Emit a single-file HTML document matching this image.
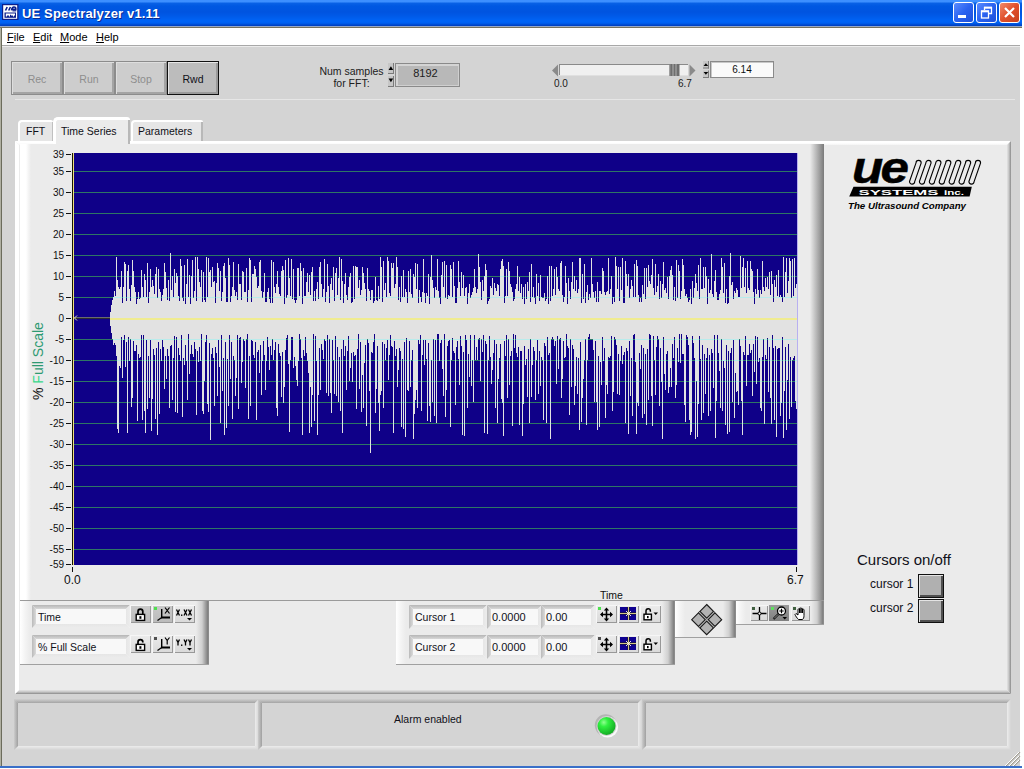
<!DOCTYPE html><html><head><meta charset="utf-8"><style>
*{box-sizing:border-box}
body{margin:0;width:1024px;height:769px;background:#fff;position:relative;overflow:hidden;font-family:'Liberation Sans',sans-serif;color:#000}
.a{position:absolute}
.t{position:absolute;white-space:nowrap;line-height:1}
</style></head><body><div class=a style="left:0;top:0;width:1022px;height:26px;background:linear-gradient(#3d8fff 0,#3d8fff 2px,#0a62e6 3px,#0058e2 6px,#0054e0 12px,#005ae8 16px,#0064f6 21px,#0060f0 23px,#0048cc 25px,#003cbc 26px)"></div><div class=a style="left:0;top:26px;width:1022px;height:1px;background:#98a8c4"></div><div class=a style="left:0;top:27px;width:1022px;height:1px;background:#76725f"></div><div class=a style="left:0;top:28px;width:1px;height:738px;background:#b0b0a2"></div><div class=a style="left:1px;top:28px;width:1px;height:738px;background:#6c6c5c"></div><div class=a style="left:2px;top:28px;width:1018px;height:17px;background:#fff"></div><div class=a style="left:2px;top:45px;width:1018px;height:1px;background:#a8a8a8"></div><div class=a style="left:2px;top:46px;width:1018px;height:1px;background:#ececec"></div><div class=a style="left:2px;top:47px;width:1018px;height:719px;background:#d4d4d4"></div><div class=a style="left:0;top:766px;width:1022px;height:2px;background:#3a6fc8"></div><svg class=a style="left:2px;top:4px" width="17" height="16"><rect x="0" y="0" width="16.5" height="16" fill="#0a1e8c"/><rect x="1.2" y="1.2" width="14" height="13.6" fill="#fff"/>
<path d="M3.5 6.5L5.2 3M6.7 6.5L8.4 3M9.5 6.3Q10 3 12 3Q14 3 13.8 5.4H10.5" stroke="#0a1e8c" stroke-width="1.6" fill="none"/><path d="M10.5 6.8H14.2" stroke="#0a1e8c" stroke-width="1.2"/>
<rect x="2.5" y="8.5" width="11.5" height="5.3" fill="#0a1e8c"/><path d="M3.8 9.6H13V11.4H12V12.6H11V11.4H9V10.8H8V12.6H7V11.4H5V12.6H3.8Z" fill="#fff"/></svg><div class=t style="left:22px;top:6.5px;font-size:13px;font-weight:bold;letter-spacing:0.15px;color:#fff;text-shadow:1px 1px 0 #0a2a90">UE Spectralyzer v1.11</div><div class=a style="left:953px;top:2px;width:21px;height:21px;border:1px solid #fff;border-radius:3px;background:linear-gradient(135deg,#5a8cff 0,#2a62f0 50%,#1e50d8 100%)"><div class=a style="left:4px;top:12px;width:8px;height:3px;background:#fff"></div></div><div class=a style="left:976px;top:2px;width:21px;height:21px;border:1px solid #fff;border-radius:3px;background:linear-gradient(135deg,#5a8cff 0,#2a62f0 50%,#1e50d8 100%)"><svg class=a style="left:0;top:0" width="21" height="21"><path d="M7.5 7V4.5H14.5V10.5H12" stroke="#fff" stroke-width="1.3" fill="none"/><rect x="7" y="3.8" width="8" height="1.8" fill="#fff"/><rect x="4.5" y="8" width="7" height="7" stroke="#fff" stroke-width="1.3" fill="none"/><rect x="4" y="7.5" width="8" height="1.8" fill="#fff"/></svg></div><div class=a style="left:999px;top:2px;width:21px;height:21px;border:1px solid #fff;border-radius:3px;background:linear-gradient(135deg,#f08a6a 0,#e0502c 50%,#c8401c 100%)"><svg class=a style="left:3px;top:3px" width="13" height="13"><path d="M2 2L11 11M11 2L2 11" stroke="#fff" stroke-width="2.2"/></svg></div><div class=t style="left:7px;top:32px;font-size:11px"><u>F</u>ile</div><div class=t style="left:33px;top:32px;font-size:11px"><u>E</u>dit</div><div class=t style="left:60px;top:32px;font-size:11px"><u>M</u>ode</div><div class=t style="left:96px;top:32px;font-size:11px"><u>H</u>elp</div><div class=a style="left:11px;top:61px;width:52px;height:34px;border:1px solid #8c8c8c;background:#cdcdcd;box-shadow:inset 1px 1px 0 #dedede,inset -2px -2px 0 #a4a4a4"></div><div class=t style="left:11px;top:74px;width:52px;text-align:center;font-size:10.5px;color:#8e8e8e">Rec</div><div class=a style="left:63px;top:61px;width:52px;height:34px;border:1px solid #8c8c8c;background:#cdcdcd;box-shadow:inset 1px 1px 0 #dedede,inset -2px -2px 0 #a4a4a4"></div><div class=t style="left:63px;top:74px;width:52px;text-align:center;font-size:10.5px;color:#8e8e8e">Run</div><div class=a style="left:115px;top:61px;width:52px;height:34px;border:1px solid #8c8c8c;background:#cdcdcd;box-shadow:inset 1px 1px 0 #dedede,inset -2px -2px 0 #a4a4a4"></div><div class=t style="left:115px;top:74px;width:52px;text-align:center;font-size:10.5px;color:#8e8e8e">Stop</div><div class=a style="left:167px;top:61px;width:52px;height:34px;border:1px solid #101010;background:#bcbcbc;box-shadow:inset 1px 1px 0 #e6e6e6,inset -2px -2px 0 #9a9a9a"></div><div class=t style="left:167px;top:74px;width:52px;text-align:center;font-size:10.5px;color:#101018">Rwd</div><div class=a style="left:15px;top:99px;width:1000px;height:1px;background:#e6e6e6"></div><div class=t style="left:319px;top:65px;font-size:10.5px;color:#202020;text-align:center;line-height:12px;width:65px">Num samples<br>for FFT:</div><svg class=a style="left:388px;top:63px;overflow:visible" width="7" height="24"><rect x="0" y="0" width="6" height="11.0" fill="#c6c6c6"/><rect x="0" y="10.0" width="6" height="1" fill="#7a7a7a"/><rect x="5" y="0" width="1" height="11.0" fill="#7a7a7a"/><rect x="0" y="13.0" width="6" height="11.0" fill="#c6c6c6"/><rect x="0" y="23" width="6" height="1" fill="#7a7a7a"/><rect x="5" y="13.0" width="1" height="11.0" fill="#7a7a7a"/><path d="M0.6 7.0H5.2L2.9 3.2Z" fill="#000"/><path d="M0.6 15.5H5.2L2.9 19.3Z" fill="#000"/></svg><div class=a style="left:395px;top:63px;width:65px;height:24px;border:1px solid #8a8a8a;background:#b8b8b8;box-shadow:inset 2px 2px 0 #d4d4d4,inset -1px -1px 0 #cfcfcf"></div><div class=t style="left:393px;top:68px;width:65px;text-align:center;font-size:11px;color:#202020">8192</div><svg class=a style="left:551px;top:63px" width="146" height="15">
<path d="M1 7.5L7 1.5V13.5Z" fill="#8a8a8a"/><path d="M138.5 1.5L144.5 7.5L138.5 13.5Z" fill="#8a8a8a"/>
<rect x="8" y="1" width="129" height="12" fill="#f0f0f0"/><rect x="8" y="1" width="129" height="1" fill="#8a8a8a"/><rect x="8" y="1" width="1" height="12" fill="#8a8a8a"/><rect x="8" y="12" width="129" height="1" fill="#e0e0e0"/>
<rect x="118.5" y="1" width="10" height="12" fill="#6e6e6e"/><rect x="121.5" y="1" width="1" height="12" fill="#b0b0b0"/><rect x="124.5" y="1" width="1" height="12" fill="#b0b0b0"/><rect x="118.5" y="1" width="1" height="12" fill="#909090"/>
</svg><div class=t style="left:554px;top:79px;font-size:10px;color:#202020">0.0</div><div class=t style="left:678px;top:79px;font-size:10px;color:#202020">6.7</div><svg class=a style="left:703px;top:61px;overflow:visible" width="7" height="17"><rect x="0" y="0" width="6" height="7.5" fill="#c6c6c6"/><rect x="0" y="6.5" width="6" height="1" fill="#7a7a7a"/><rect x="5" y="0" width="1" height="7.5" fill="#7a7a7a"/><rect x="0" y="9.5" width="6" height="7.5" fill="#c6c6c6"/><rect x="0" y="16" width="6" height="1" fill="#7a7a7a"/><rect x="5" y="9.5" width="1" height="7.5" fill="#7a7a7a"/><path d="M0.6 4.958333333333334H5.2L2.9 2.266666666666667Z" fill="#000"/><path d="M0.6 10.979166666666666H5.2L2.9 13.670833333333333Z" fill="#000"/></svg><div class=a style="left:710px;top:61px;width:64px;height:17px;border:1px solid #8a8a8a;background:#fafafa;box-shadow:inset 1px 1px 0 #c8c8c8"></div><div class=t style="left:710px;top:65px;width:64px;text-align:center;font-size:10px;color:#101010">6.14</div><div class=a style="left:15px;top:141px;width:996px;height:553px;background:#ebebeb"></div><div class=a style="left:15px;top:141px;width:996px;height:4px;background:linear-gradient(to bottom,#fff,#fff 50%,#f4f4f4);clip-path:polygon(0 0,100% 0,calc(100% - 4px) 100%,4px 100%)"></div><div class=a style="left:15px;top:690px;width:996px;height:4px;background:linear-gradient(to top,#8a8a8a,#c4c4c4 50%,#e4e4e4);clip-path:polygon(4px 0,calc(100% - 4px) 0,100% 100%,0 100%)"></div><div class=a style="left:15px;top:141px;width:4px;height:553px;background:linear-gradient(to right,#fff,#fff);clip-path:polygon(0 0,100% 4px,100% calc(100% - 4px),0 100%)"></div><div class=a style="left:1007px;top:141px;width:4px;height:553px;background:linear-gradient(to left,#8a8a8a,#c4c4c4 50%,#e4e4e4);clip-path:polygon(0 4px,100% 0,100% 100%,0 calc(100% - 4px))"></div><div class=a style="left:18px;top:120px;width:35px;height:21px;background:#e6e6e6;border-top:2px solid #fff;border-left:2px solid #fff;border-radius:4px 2px 0 0;box-shadow:inset -1px 0 0 #c0c0c0"></div><div class=a style="left:53px;top:117px;width:77px;height:28px;background:#ebebeb;border-top:3px solid #fff;border-left:3px solid #fff;border-radius:5px 3px 0 0;box-shadow:inset -2px 0 0 #b8b8b8"></div><div class=a style="left:131px;top:120px;width:72px;height:21px;background:#e6e6e6;border-top:2px solid #fff;border-left:2px solid #fff;border-radius:4px 2px 0 0;box-shadow:inset -2px 0 0 #b8b8b8"></div><div class=t style="left:26px;top:126px;font-size:10.5px;color:#101018">FFT</div><div class=t style="left:61px;top:126px;font-size:10.5px;color:#101018">Time Series</div><div class=t style="left:138px;top:126px;font-size:10.5px;color:#101018">Parameters</div><div class=a style="left:20px;top:144px;width:804px;height:457px;background:linear-gradient(90deg,#fff 0,#fff 6px,#f6f6f6 8px,#ebebeb 11px,#ebebeb 790px,#7a7a7a 804px);border-bottom:1px solid #9a9a9a"></div><svg class=a style="left:72px;top:153px" width="727" height="420" viewBox="72 153 727 420">
<rect x="72" y="153" width="726" height="412" fill="#0f0088"/>
<rect x="74" y="549" width="723" height="1" fill="#2e7664"/><rect x="74" y="528" width="723" height="1" fill="#2e7664"/><rect x="74" y="507" width="723" height="1" fill="#2e7664"/><rect x="74" y="486" width="723" height="1" fill="#2e7664"/><rect x="74" y="465" width="723" height="1" fill="#2e7664"/><rect x="74" y="444" width="723" height="1" fill="#2e7664"/><rect x="74" y="423" width="723" height="1" fill="#2e7664"/><rect x="74" y="402" width="723" height="1" fill="#2e7664"/><rect x="74" y="381" width="723" height="1" fill="#2e7664"/><rect x="74" y="360" width="723" height="1" fill="#2e7664"/><rect x="74" y="339" width="723" height="1" fill="#2e7664"/><rect x="74" y="318" width="723" height="1" fill="#2e7664"/><rect x="74" y="297" width="723" height="1" fill="#2e7664"/><rect x="74" y="276" width="723" height="1" fill="#2e7664"/><rect x="74" y="255" width="723" height="1" fill="#2e7664"/><rect x="74" y="234" width="723" height="1" fill="#2e7664"/><rect x="74" y="213" width="723" height="1" fill="#2e7664"/><rect x="74" y="192" width="723" height="1" fill="#2e7664"/><rect x="74" y="171" width="723" height="1" fill="#2e7664"/>
<path d="M110.5 312V326M111.5 305V333M112.5 300V339M113.5 297V345M114.5 291V343M115.5 296V345M116.5 257V356M117.5 280V429M118.5 287V433M119.5 289V366M120.5 287V368M121.5 271V337M122.5 303V378M123.5 287V340M124.5 262V335M125.5 264V367M126.5 301V342M127.5 271V433M128.5 265V337M129.5 289V361M130.5 301V339M131.5 285V407M132.5 260V398M133.5 271V341M134.5 287V351M135.5 292V351M136.5 304V345M137.5 299V421M138.5 292V354M139.5 299V358M140.5 298V357M141.5 270V335M142.5 287V420M143.5 297V335M144.5 274V411M145.5 280V433M146.5 297V340M147.5 263V409M148.5 303V356M149.5 292V398M150.5 269V340M151.5 287V431M152.5 280V399M153.5 286V349M154.5 294V355M155.5 274V419M156.5 267V348M157.5 298V435M158.5 269V342M159.5 289V414M160.5 292V349M161.5 301V361M162.5 295V340M163.5 289V347M164.5 263V389M165.5 272V356M166.5 288V379M167.5 300V349M168.5 280V356M169.5 301V408M170.5 253V346M171.5 290V345M172.5 276V400M173.5 297V358M174.5 269V336M175.5 283V412M176.5 273V337M177.5 276V413M178.5 296V348M179.5 301V355M180.5 259V361M181.5 266V335M182.5 298V417M183.5 301V358M184.5 265V365M185.5 304V345M186.5 284V361M187.5 259V400M188.5 297V334M189.5 275V374M190.5 304V354M191.5 276V345M192.5 260V354M193.5 298V357M194.5 291V342M195.5 257V349M196.5 301V415M197.5 257V351M198.5 269V362M199.5 282V347M200.5 287V361M201.5 270V334M202.5 302V411M203.5 272V414M204.5 300V381M205.5 302V342M206.5 257V335M207.5 297V404M208.5 258V412M209.5 272V343M210.5 270V440M211.5 287V354M212.5 267V348M213.5 282V358M214.5 281V406M215.5 303V347M216.5 283V353M217.5 263V396M218.5 268V340M219.5 291V367M220.5 271V423M221.5 301V335M222.5 292V391M223.5 266V358M224.5 263V435M225.5 278V342M226.5 302V428M227.5 302V359M228.5 258V406M229.5 265V335M230.5 302V379M231.5 296V342M232.5 287V419M233.5 262V356M234.5 290V360M235.5 296V396M236.5 292V378M237.5 300V335M238.5 264V409M239.5 284V338M240.5 284V337M241.5 300V383M242.5 271V362M243.5 272V339M244.5 292V341M245.5 292V388M246.5 268V339M247.5 302V334M248.5 290V419M249.5 258V356M250.5 260V406M251.5 302V340M252.5 274V341M253.5 274V355M254.5 266V358M255.5 269V342M256.5 277V420M257.5 288V352M258.5 286V350M259.5 262V373M260.5 260V345M261.5 291V395M262.5 298V361M263.5 292V341M264.5 273V355M265.5 302V390M266.5 302V361M267.5 292V337M268.5 288V347M269.5 299V370M270.5 303V346M271.5 260V355M272.5 303V339M273.5 262V360M274.5 287V350M275.5 293V342M276.5 284V408M277.5 271V416M278.5 287V344M279.5 294V353M280.5 296V356M281.5 271V397M282.5 266V352M283.5 270V403M284.5 304V387M285.5 260V350M286.5 298V338M287.5 295V335M288.5 258V364M289.5 278V432M290.5 296V360M291.5 259V337M292.5 299V337M293.5 269V368M294.5 300V357M295.5 303V366M296.5 300V380M297.5 268V386M298.5 268V361M299.5 296V334M300.5 263V339M301.5 271V358M302.5 304V435M303.5 268V350M304.5 296V356M305.5 296V337M306.5 282V353M307.5 273V361M308.5 292V373M309.5 275V433M310.5 295V387M311.5 272V427M312.5 267V395M313.5 301V334M314.5 291V421M315.5 301V336M316.5 289V361M317.5 282V435M318.5 299V395M319.5 267V348M320.5 262V390M321.5 284V344M322.5 297V350M323.5 289V359M324.5 259V339M325.5 302V341M326.5 292V393M327.5 264V335M328.5 286V396M329.5 303V339M330.5 284V393M331.5 278V413M332.5 290V340M333.5 267V360M334.5 301V394M335.5 273V336M336.5 268V396M337.5 295V347M338.5 278V402M339.5 257V357M340.5 300V411M341.5 259V349M342.5 281V433M343.5 303V340M344.5 284V356M345.5 273V346M346.5 295V390M347.5 300V351M348.5 287V336M349.5 277V381M350.5 273V368M351.5 303V353M352.5 302V382M353.5 266V352M354.5 299V356M355.5 266V355M356.5 267V409M357.5 267V349M358.5 288V334M359.5 280V389M360.5 295V342M361.5 290V412M362.5 267V375M363.5 273V408M364.5 283V363M365.5 289V345M366.5 301V426M367.5 268V339M368.5 289V343M369.5 291V391M370.5 300V453M371.5 290V352M372.5 290V353M373.5 303V342M374.5 301V334M375.5 277V413M376.5 300V389M377.5 301V346M378.5 286V403M379.5 299V431M380.5 257V395M381.5 267V391M382.5 302V342M383.5 261V408M384.5 290V344M385.5 283V360M386.5 297V348M387.5 257V340M388.5 261V380M389.5 293V355M390.5 296V335M391.5 263V346M392.5 268V347M393.5 263V433M394.5 288V341M395.5 284V356M396.5 257V349M397.5 267V387M398.5 300V370M399.5 287V348M400.5 302V351M401.5 276V427M402.5 297V359M403.5 270V429M404.5 297V342M405.5 289V437M406.5 292V338M407.5 303V390M408.5 271V391M409.5 292V341M410.5 269V387M411.5 294V360M412.5 298V350M413.5 274V439M414.5 277V414M415.5 263V400M416.5 289V390M417.5 264V408M418.5 303V340M419.5 290V344M420.5 297V335M421.5 302V411M422.5 292V355M423.5 259V340M424.5 293V365M425.5 303V340M426.5 293V359M427.5 296V421M428.5 274V343M429.5 304V406M430.5 277V422M431.5 255V360M432.5 280V402M433.5 288V339M434.5 298V416M435.5 287V340M436.5 290V423M437.5 259V334M438.5 291V334M439.5 298V361M440.5 304V343M441.5 275V340M442.5 262V369M443.5 287V396M444.5 261V334M445.5 298V417M446.5 265V390M447.5 299V346M448.5 295V341M449.5 296V340M450.5 265V427M451.5 269V360M452.5 297V338M453.5 262V351M454.5 286V353M455.5 303V405M456.5 303V347M457.5 288V341M458.5 261V359M459.5 282V385M460.5 296V336M461.5 272V346M462.5 288V435M463.5 275V352M464.5 296V436M465.5 288V335M466.5 287V340M467.5 304V408M468.5 293V354M469.5 284V377M470.5 298V335M471.5 295V386M472.5 292V360M473.5 288V402M474.5 269V335M475.5 287V360M476.5 293V347M477.5 289V360M478.5 254V339M479.5 267V338M480.5 282V381M481.5 300V339M482.5 280V352M483.5 291V335M484.5 276V433M485.5 264V341M486.5 270V344M487.5 304V434M488.5 301V360M489.5 299V336M490.5 286V357M491.5 288V384M492.5 278V370M493.5 295V353M494.5 283V340M495.5 288V408M496.5 291V344M497.5 284V423M498.5 285V379M499.5 296V358M500.5 269V344M501.5 261V399M502.5 259V403M503.5 266V436M504.5 303V341M505.5 296V356M506.5 269V335M507.5 296V398M508.5 262V339M509.5 271V385M510.5 284V356M511.5 287V351M512.5 292V426M513.5 301V334M514.5 299V348M515.5 289V335M516.5 284V353M517.5 266V357M518.5 291V347M519.5 277V425M520.5 293V351M521.5 284V351M522.5 299V436M523.5 287V404M524.5 304V346M525.5 284V365M526.5 299V359M527.5 282V397M528.5 291V349M529.5 272V423M530.5 302V339M531.5 264V397M532.5 297V365M533.5 287V347M534.5 298V351M535.5 304V400M536.5 274V360M537.5 296V340M538.5 283V394M539.5 301V351M540.5 275V386M541.5 297V357M542.5 298V360M543.5 298V420M544.5 293V343M545.5 301V346M546.5 299V423M547.5 276V337M548.5 304V355M549.5 266V353M550.5 301V439M551.5 266V339M552.5 296V337M553.5 289V339M554.5 269V346M555.5 295V341M556.5 267V384M557.5 277V336M558.5 289V369M559.5 291V339M560.5 263V338M561.5 261V398M562.5 295V379M563.5 302V341M564.5 297V358M565.5 266V357M566.5 283V334M567.5 304V346M568.5 278V348M569.5 291V415M570.5 299V339M571.5 282V387M572.5 262V345M573.5 289V349M574.5 276V405M575.5 291V386M576.5 280V357M577.5 293V394M578.5 289V358M579.5 258V430M580.5 258V342M581.5 303V422M582.5 274V398M583.5 299V379M584.5 264V360M585.5 303V339M586.5 292V425M587.5 285V360M588.5 300V337M589.5 294V334M590.5 298V339M591.5 258V339M592.5 284V339M593.5 292V350M594.5 298V402M595.5 291V341M596.5 302V402M597.5 282V430M598.5 302V356M599.5 291V427M600.5 291V362M601.5 294V385M602.5 268V337M603.5 271V361M604.5 292V348M605.5 295V418M606.5 292V385M607.5 291V394M608.5 258V357M609.5 294V358M610.5 289V356M611.5 276V336M612.5 304V411M613.5 297V392M614.5 302V337M615.5 257V339M616.5 266V345M617.5 289V394M618.5 267V354M619.5 301V395M620.5 267V361M621.5 290V346M622.5 258V364M623.5 303V355M624.5 303V352M625.5 261V423M626.5 274V348M627.5 286V351M628.5 274V434M629.5 298V341M630.5 289V396M631.5 280V358M632.5 286V416M633.5 297V335M634.5 264V334M635.5 297V362M636.5 260V434M637.5 266V403M638.5 295V406M639.5 302V353M640.5 298V369M641.5 302V345M642.5 285V418M643.5 294V348M644.5 268V414M645.5 299V354M646.5 268V425M647.5 287V349M648.5 265V400M649.5 281V334M650.5 284V335M651.5 275V396M652.5 259V426M653.5 288V336M654.5 295V360M655.5 264V395M656.5 292V347M657.5 286V336M658.5 274V339M659.5 299V406M660.5 281V348M661.5 298V382M662.5 284V439M663.5 262V337M664.5 290V374M665.5 288V390M666.5 293V354M667.5 277V351M668.5 299V393M669.5 276V387M670.5 270V368M671.5 266V387M672.5 275V344M673.5 300V358M674.5 287V337M675.5 301V398M676.5 260V385M677.5 298V348M678.5 265V362M679.5 271V334M680.5 299V363M681.5 291V334M682.5 259V354M683.5 265V354M684.5 289V405M685.5 296V422M686.5 294V335M687.5 298V337M688.5 302V345M689.5 300V420M690.5 289V435M691.5 304V432M692.5 281V336M693.5 298V343M694.5 288V358M695.5 274V439M696.5 283V381M697.5 291V437M698.5 265V404M699.5 299V336M700.5 258V359M701.5 289V420M702.5 289V345M703.5 267V413M704.5 288V354M705.5 267V394M706.5 276V358M707.5 304V348M708.5 279V416M709.5 293V355M710.5 290V411M711.5 254V349M712.5 294V353M713.5 297V388M714.5 281V335M715.5 270V438M716.5 292V401M717.5 300V335M718.5 300V353M719.5 294V371M720.5 290V408M721.5 258V339M722.5 267V411M723.5 293V361M724.5 263V368M725.5 303V425M726.5 289V345M727.5 304V434M728.5 303V351M729.5 276V432M730.5 253V353M731.5 285V348M732.5 282V402M733.5 299V340M734.5 291V418M735.5 293V373M736.5 288V392M737.5 290V391M738.5 297V405M739.5 297V339M740.5 256V346M741.5 288V401M742.5 267V435M743.5 258V352M744.5 287V355M745.5 268V336M746.5 293V386M747.5 261V355M748.5 288V355M749.5 290V344M750.5 261V353M751.5 269V350M752.5 271V396M753.5 292V344M754.5 304V372M755.5 289V336M756.5 294V384M757.5 269V337M758.5 290V362M759.5 298V358M760.5 290V408M761.5 294V411M762.5 261V357M763.5 287V339M764.5 291V424M765.5 278V355M766.5 287V359M767.5 277V338M768.5 289V392M769.5 272V347M770.5 295V398M771.5 271V424M772.5 284V335M773.5 302V348M774.5 280V420M775.5 287V346M776.5 275V437M777.5 296V349M778.5 270V348M779.5 297V348M780.5 295V416M781.5 297V403M782.5 302V337M783.5 257V438M784.5 297V391M785.5 272V347M786.5 258V430M787.5 293V380M788.5 281V344M789.5 258V419M790.5 261V357M791.5 298V407M792.5 259V360M793.5 296V358M794.5 258V356M795.5 288V401M796.5 284V409" stroke="#e2e2e2" stroke-width="1" fill="none"/>
<mask id="wm" maskUnits="userSpaceOnUse" x="72" y="153" width="727" height="420"><path d="M110.5 312V326M111.5 305V333M112.5 300V339M113.5 297V345M114.5 291V343M115.5 296V345M116.5 257V356M117.5 280V429M118.5 287V433M119.5 289V366M120.5 287V368M121.5 271V337M122.5 303V378M123.5 287V340M124.5 262V335M125.5 264V367M126.5 301V342M127.5 271V433M128.5 265V337M129.5 289V361M130.5 301V339M131.5 285V407M132.5 260V398M133.5 271V341M134.5 287V351M135.5 292V351M136.5 304V345M137.5 299V421M138.5 292V354M139.5 299V358M140.5 298V357M141.5 270V335M142.5 287V420M143.5 297V335M144.5 274V411M145.5 280V433M146.5 297V340M147.5 263V409M148.5 303V356M149.5 292V398M150.5 269V340M151.5 287V431M152.5 280V399M153.5 286V349M154.5 294V355M155.5 274V419M156.5 267V348M157.5 298V435M158.5 269V342M159.5 289V414M160.5 292V349M161.5 301V361M162.5 295V340M163.5 289V347M164.5 263V389M165.5 272V356M166.5 288V379M167.5 300V349M168.5 280V356M169.5 301V408M170.5 253V346M171.5 290V345M172.5 276V400M173.5 297V358M174.5 269V336M175.5 283V412M176.5 273V337M177.5 276V413M178.5 296V348M179.5 301V355M180.5 259V361M181.5 266V335M182.5 298V417M183.5 301V358M184.5 265V365M185.5 304V345M186.5 284V361M187.5 259V400M188.5 297V334M189.5 275V374M190.5 304V354M191.5 276V345M192.5 260V354M193.5 298V357M194.5 291V342M195.5 257V349M196.5 301V415M197.5 257V351M198.5 269V362M199.5 282V347M200.5 287V361M201.5 270V334M202.5 302V411M203.5 272V414M204.5 300V381M205.5 302V342M206.5 257V335M207.5 297V404M208.5 258V412M209.5 272V343M210.5 270V440M211.5 287V354M212.5 267V348M213.5 282V358M214.5 281V406M215.5 303V347M216.5 283V353M217.5 263V396M218.5 268V340M219.5 291V367M220.5 271V423M221.5 301V335M222.5 292V391M223.5 266V358M224.5 263V435M225.5 278V342M226.5 302V428M227.5 302V359M228.5 258V406M229.5 265V335M230.5 302V379M231.5 296V342M232.5 287V419M233.5 262V356M234.5 290V360M235.5 296V396M236.5 292V378M237.5 300V335M238.5 264V409M239.5 284V338M240.5 284V337M241.5 300V383M242.5 271V362M243.5 272V339M244.5 292V341M245.5 292V388M246.5 268V339M247.5 302V334M248.5 290V419M249.5 258V356M250.5 260V406M251.5 302V340M252.5 274V341M253.5 274V355M254.5 266V358M255.5 269V342M256.5 277V420M257.5 288V352M258.5 286V350M259.5 262V373M260.5 260V345M261.5 291V395M262.5 298V361M263.5 292V341M264.5 273V355M265.5 302V390M266.5 302V361M267.5 292V337M268.5 288V347M269.5 299V370M270.5 303V346M271.5 260V355M272.5 303V339M273.5 262V360M274.5 287V350M275.5 293V342M276.5 284V408M277.5 271V416M278.5 287V344M279.5 294V353M280.5 296V356M281.5 271V397M282.5 266V352M283.5 270V403M284.5 304V387M285.5 260V350M286.5 298V338M287.5 295V335M288.5 258V364M289.5 278V432M290.5 296V360M291.5 259V337M292.5 299V337M293.5 269V368M294.5 300V357M295.5 303V366M296.5 300V380M297.5 268V386M298.5 268V361M299.5 296V334M300.5 263V339M301.5 271V358M302.5 304V435M303.5 268V350M304.5 296V356M305.5 296V337M306.5 282V353M307.5 273V361M308.5 292V373M309.5 275V433M310.5 295V387M311.5 272V427M312.5 267V395M313.5 301V334M314.5 291V421M315.5 301V336M316.5 289V361M317.5 282V435M318.5 299V395M319.5 267V348M320.5 262V390M321.5 284V344M322.5 297V350M323.5 289V359M324.5 259V339M325.5 302V341M326.5 292V393M327.5 264V335M328.5 286V396M329.5 303V339M330.5 284V393M331.5 278V413M332.5 290V340M333.5 267V360M334.5 301V394M335.5 273V336M336.5 268V396M337.5 295V347M338.5 278V402M339.5 257V357M340.5 300V411M341.5 259V349M342.5 281V433M343.5 303V340M344.5 284V356M345.5 273V346M346.5 295V390M347.5 300V351M348.5 287V336M349.5 277V381M350.5 273V368M351.5 303V353M352.5 302V382M353.5 266V352M354.5 299V356M355.5 266V355M356.5 267V409M357.5 267V349M358.5 288V334M359.5 280V389M360.5 295V342M361.5 290V412M362.5 267V375M363.5 273V408M364.5 283V363M365.5 289V345M366.5 301V426M367.5 268V339M368.5 289V343M369.5 291V391M370.5 300V453M371.5 290V352M372.5 290V353M373.5 303V342M374.5 301V334M375.5 277V413M376.5 300V389M377.5 301V346M378.5 286V403M379.5 299V431M380.5 257V395M381.5 267V391M382.5 302V342M383.5 261V408M384.5 290V344M385.5 283V360M386.5 297V348M387.5 257V340M388.5 261V380M389.5 293V355M390.5 296V335M391.5 263V346M392.5 268V347M393.5 263V433M394.5 288V341M395.5 284V356M396.5 257V349M397.5 267V387M398.5 300V370M399.5 287V348M400.5 302V351M401.5 276V427M402.5 297V359M403.5 270V429M404.5 297V342M405.5 289V437M406.5 292V338M407.5 303V390M408.5 271V391M409.5 292V341M410.5 269V387M411.5 294V360M412.5 298V350M413.5 274V439M414.5 277V414M415.5 263V400M416.5 289V390M417.5 264V408M418.5 303V340M419.5 290V344M420.5 297V335M421.5 302V411M422.5 292V355M423.5 259V340M424.5 293V365M425.5 303V340M426.5 293V359M427.5 296V421M428.5 274V343M429.5 304V406M430.5 277V422M431.5 255V360M432.5 280V402M433.5 288V339M434.5 298V416M435.5 287V340M436.5 290V423M437.5 259V334M438.5 291V334M439.5 298V361M440.5 304V343M441.5 275V340M442.5 262V369M443.5 287V396M444.5 261V334M445.5 298V417M446.5 265V390M447.5 299V346M448.5 295V341M449.5 296V340M450.5 265V427M451.5 269V360M452.5 297V338M453.5 262V351M454.5 286V353M455.5 303V405M456.5 303V347M457.5 288V341M458.5 261V359M459.5 282V385M460.5 296V336M461.5 272V346M462.5 288V435M463.5 275V352M464.5 296V436M465.5 288V335M466.5 287V340M467.5 304V408M468.5 293V354M469.5 284V377M470.5 298V335M471.5 295V386M472.5 292V360M473.5 288V402M474.5 269V335M475.5 287V360M476.5 293V347M477.5 289V360M478.5 254V339M479.5 267V338M480.5 282V381M481.5 300V339M482.5 280V352M483.5 291V335M484.5 276V433M485.5 264V341M486.5 270V344M487.5 304V434M488.5 301V360M489.5 299V336M490.5 286V357M491.5 288V384M492.5 278V370M493.5 295V353M494.5 283V340M495.5 288V408M496.5 291V344M497.5 284V423M498.5 285V379M499.5 296V358M500.5 269V344M501.5 261V399M502.5 259V403M503.5 266V436M504.5 303V341M505.5 296V356M506.5 269V335M507.5 296V398M508.5 262V339M509.5 271V385M510.5 284V356M511.5 287V351M512.5 292V426M513.5 301V334M514.5 299V348M515.5 289V335M516.5 284V353M517.5 266V357M518.5 291V347M519.5 277V425M520.5 293V351M521.5 284V351M522.5 299V436M523.5 287V404M524.5 304V346M525.5 284V365M526.5 299V359M527.5 282V397M528.5 291V349M529.5 272V423M530.5 302V339M531.5 264V397M532.5 297V365M533.5 287V347M534.5 298V351M535.5 304V400M536.5 274V360M537.5 296V340M538.5 283V394M539.5 301V351M540.5 275V386M541.5 297V357M542.5 298V360M543.5 298V420M544.5 293V343M545.5 301V346M546.5 299V423M547.5 276V337M548.5 304V355M549.5 266V353M550.5 301V439M551.5 266V339M552.5 296V337M553.5 289V339M554.5 269V346M555.5 295V341M556.5 267V384M557.5 277V336M558.5 289V369M559.5 291V339M560.5 263V338M561.5 261V398M562.5 295V379M563.5 302V341M564.5 297V358M565.5 266V357M566.5 283V334M567.5 304V346M568.5 278V348M569.5 291V415M570.5 299V339M571.5 282V387M572.5 262V345M573.5 289V349M574.5 276V405M575.5 291V386M576.5 280V357M577.5 293V394M578.5 289V358M579.5 258V430M580.5 258V342M581.5 303V422M582.5 274V398M583.5 299V379M584.5 264V360M585.5 303V339M586.5 292V425M587.5 285V360M588.5 300V337M589.5 294V334M590.5 298V339M591.5 258V339M592.5 284V339M593.5 292V350M594.5 298V402M595.5 291V341M596.5 302V402M597.5 282V430M598.5 302V356M599.5 291V427M600.5 291V362M601.5 294V385M602.5 268V337M603.5 271V361M604.5 292V348M605.5 295V418M606.5 292V385M607.5 291V394M608.5 258V357M609.5 294V358M610.5 289V356M611.5 276V336M612.5 304V411M613.5 297V392M614.5 302V337M615.5 257V339M616.5 266V345M617.5 289V394M618.5 267V354M619.5 301V395M620.5 267V361M621.5 290V346M622.5 258V364M623.5 303V355M624.5 303V352M625.5 261V423M626.5 274V348M627.5 286V351M628.5 274V434M629.5 298V341M630.5 289V396M631.5 280V358M632.5 286V416M633.5 297V335M634.5 264V334M635.5 297V362M636.5 260V434M637.5 266V403M638.5 295V406M639.5 302V353M640.5 298V369M641.5 302V345M642.5 285V418M643.5 294V348M644.5 268V414M645.5 299V354M646.5 268V425M647.5 287V349M648.5 265V400M649.5 281V334M650.5 284V335M651.5 275V396M652.5 259V426M653.5 288V336M654.5 295V360M655.5 264V395M656.5 292V347M657.5 286V336M658.5 274V339M659.5 299V406M660.5 281V348M661.5 298V382M662.5 284V439M663.5 262V337M664.5 290V374M665.5 288V390M666.5 293V354M667.5 277V351M668.5 299V393M669.5 276V387M670.5 270V368M671.5 266V387M672.5 275V344M673.5 300V358M674.5 287V337M675.5 301V398M676.5 260V385M677.5 298V348M678.5 265V362M679.5 271V334M680.5 299V363M681.5 291V334M682.5 259V354M683.5 265V354M684.5 289V405M685.5 296V422M686.5 294V335M687.5 298V337M688.5 302V345M689.5 300V420M690.5 289V435M691.5 304V432M692.5 281V336M693.5 298V343M694.5 288V358M695.5 274V439M696.5 283V381M697.5 291V437M698.5 265V404M699.5 299V336M700.5 258V359M701.5 289V420M702.5 289V345M703.5 267V413M704.5 288V354M705.5 267V394M706.5 276V358M707.5 304V348M708.5 279V416M709.5 293V355M710.5 290V411M711.5 254V349M712.5 294V353M713.5 297V388M714.5 281V335M715.5 270V438M716.5 292V401M717.5 300V335M718.5 300V353M719.5 294V371M720.5 290V408M721.5 258V339M722.5 267V411M723.5 293V361M724.5 263V368M725.5 303V425M726.5 289V345M727.5 304V434M728.5 303V351M729.5 276V432M730.5 253V353M731.5 285V348M732.5 282V402M733.5 299V340M734.5 291V418M735.5 293V373M736.5 288V392M737.5 290V391M738.5 297V405M739.5 297V339M740.5 256V346M741.5 288V401M742.5 267V435M743.5 258V352M744.5 287V355M745.5 268V336M746.5 293V386M747.5 261V355M748.5 288V355M749.5 290V344M750.5 261V353M751.5 269V350M752.5 271V396M753.5 292V344M754.5 304V372M755.5 289V336M756.5 294V384M757.5 269V337M758.5 290V362M759.5 298V358M760.5 290V408M761.5 294V411M762.5 261V357M763.5 287V339M764.5 291V424M765.5 278V355M766.5 287V359M767.5 277V338M768.5 289V392M769.5 272V347M770.5 295V398M771.5 271V424M772.5 284V335M773.5 302V348M774.5 280V420M775.5 287V346M776.5 275V437M777.5 296V349M778.5 270V348M779.5 297V348M780.5 295V416M781.5 297V403M782.5 302V337M783.5 257V438M784.5 297V391M785.5 272V347M786.5 258V430M787.5 293V380M788.5 281V344M789.5 258V419M790.5 261V357M791.5 298V407M792.5 259V360M793.5 296V358M794.5 258V356M795.5 288V401M796.5 284V409" stroke="#fff" stroke-width="1" fill="none"/></mask>
<g mask="url(#wm)"><rect x="74" y="549" width="723" height="1" fill="#b8ecec"/><rect x="74" y="528" width="723" height="1" fill="#b8ecec"/><rect x="74" y="507" width="723" height="1" fill="#b8ecec"/><rect x="74" y="486" width="723" height="1" fill="#b8ecec"/><rect x="74" y="465" width="723" height="1" fill="#b8ecec"/><rect x="74" y="444" width="723" height="1" fill="#b8ecec"/><rect x="74" y="423" width="723" height="1" fill="#b8ecec"/><rect x="74" y="402" width="723" height="1" fill="#b8ecec"/><rect x="74" y="381" width="723" height="1" fill="#b8ecec"/><rect x="74" y="360" width="723" height="1" fill="#b8ecec"/><rect x="74" y="339" width="723" height="1" fill="#b8ecec"/><rect x="74" y="318" width="723" height="1" fill="#b8ecec"/><rect x="74" y="297" width="723" height="1" fill="#b8ecec"/><rect x="74" y="276" width="723" height="1" fill="#b8ecec"/><rect x="74" y="255" width="723" height="1" fill="#b8ecec"/><rect x="74" y="234" width="723" height="1" fill="#b8ecec"/><rect x="74" y="213" width="723" height="1" fill="#b8ecec"/><rect x="74" y="192" width="723" height="1" fill="#b8ecec"/><rect x="74" y="171" width="723" height="1" fill="#b8ecec"/></g>
<rect x="74" y="318" width="36" height="1" fill="#2a2a30"/><rect x="74" y="317" width="36" height="1" fill="#6a6a70"/><rect x="110" y="318" width="687" height="2" fill="#f0ec90"/><path d="M77 315.5L74.5 318L77 320.5" stroke="#e0e0c0" fill="none" stroke-width="1"/>
<rect x="72" y="153" width="1" height="412" fill="#181800"/>
<rect x="73" y="153" width="1" height="412" fill="#f0e080"/>
<rect x="797" y="153" width="1" height="412" fill="#b8b0f0"/>
</svg><div class=a style="left:66px;top:171px;width:5px;height:1px;background:#101010"></div><div class=t style="left:0;top:167px;width:64px;text-align:right;font-size:10px;color:#101010">35</div><div class=a style="left:66px;top:192px;width:5px;height:1px;background:#101010"></div><div class=t style="left:0;top:188px;width:64px;text-align:right;font-size:10px;color:#101010">30</div><div class=a style="left:66px;top:213px;width:5px;height:1px;background:#101010"></div><div class=t style="left:0;top:209px;width:64px;text-align:right;font-size:10px;color:#101010">25</div><div class=a style="left:66px;top:234px;width:5px;height:1px;background:#101010"></div><div class=t style="left:0;top:230px;width:64px;text-align:right;font-size:10px;color:#101010">20</div><div class=a style="left:66px;top:255px;width:5px;height:1px;background:#101010"></div><div class=t style="left:0;top:251px;width:64px;text-align:right;font-size:10px;color:#101010">15</div><div class=a style="left:66px;top:276px;width:5px;height:1px;background:#101010"></div><div class=t style="left:0;top:272px;width:64px;text-align:right;font-size:10px;color:#101010">10</div><div class=a style="left:66px;top:297px;width:5px;height:1px;background:#101010"></div><div class=t style="left:0;top:293px;width:64px;text-align:right;font-size:10px;color:#101010">5</div><div class=a style="left:66px;top:318px;width:5px;height:1px;background:#101010"></div><div class=t style="left:0;top:314px;width:64px;text-align:right;font-size:10px;color:#101010">0</div><div class=a style="left:66px;top:339px;width:5px;height:1px;background:#101010"></div><div class=t style="left:0;top:335px;width:64px;text-align:right;font-size:10px;color:#101010">-5</div><div class=a style="left:66px;top:360px;width:5px;height:1px;background:#101010"></div><div class=t style="left:0;top:356px;width:64px;text-align:right;font-size:10px;color:#101010">-10</div><div class=a style="left:66px;top:381px;width:5px;height:1px;background:#101010"></div><div class=t style="left:0;top:377px;width:64px;text-align:right;font-size:10px;color:#101010">-15</div><div class=a style="left:66px;top:402px;width:5px;height:1px;background:#101010"></div><div class=t style="left:0;top:398px;width:64px;text-align:right;font-size:10px;color:#101010">-20</div><div class=a style="left:66px;top:423px;width:5px;height:1px;background:#101010"></div><div class=t style="left:0;top:419px;width:64px;text-align:right;font-size:10px;color:#101010">-25</div><div class=a style="left:66px;top:444px;width:5px;height:1px;background:#101010"></div><div class=t style="left:0;top:440px;width:64px;text-align:right;font-size:10px;color:#101010">-30</div><div class=a style="left:66px;top:465px;width:5px;height:1px;background:#101010"></div><div class=t style="left:0;top:461px;width:64px;text-align:right;font-size:10px;color:#101010">-35</div><div class=a style="left:66px;top:486px;width:5px;height:1px;background:#101010"></div><div class=t style="left:0;top:482px;width:64px;text-align:right;font-size:10px;color:#101010">-40</div><div class=a style="left:66px;top:507px;width:5px;height:1px;background:#101010"></div><div class=t style="left:0;top:503px;width:64px;text-align:right;font-size:10px;color:#101010">-45</div><div class=a style="left:66px;top:528px;width:5px;height:1px;background:#101010"></div><div class=t style="left:0;top:524px;width:64px;text-align:right;font-size:10px;color:#101010">-50</div><div class=a style="left:66px;top:549px;width:5px;height:1px;background:#101010"></div><div class=t style="left:0;top:545px;width:64px;text-align:right;font-size:10px;color:#101010">-55</div><div class=a style="left:66px;top:154px;width:5px;height:1px;background:#101010"></div><div class=t style="left:0;top:150px;width:64px;text-align:right;font-size:10px;color:#101010">39</div><div class=a style="left:66px;top:564px;width:5px;height:1px;background:#101010"></div><div class=t style="left:0;top:560px;width:64px;text-align:right;font-size:10px;color:#101010">-59</div><div class=a style="left:72px;top:567px;width:1px;height:5px;background:#101010"></div><div class=a style="left:796px;top:567px;width:1px;height:5px;background:#101010"></div><div class=t style="left:64px;top:574px;font-size:12px;color:#101010">0.0</div><div class=t style="left:787px;top:574px;font-size:12px;color:#101010">6.7</div><div class=t style="left:600px;top:590px;font-size:10.5px;color:#101010">Time</div><div class=t style="left:31px;top:400px;font-size:14px;color:#2e9a72;transform:rotate(-90deg);transform-origin:0 0"><span style="color:#101010">%</span> <span style="color:#3ad88a">F</span>ull Scale</div><div class=a style="left:20px;top:601px;width:189px;height:64px;background:linear-gradient(90deg,#fff 0,#f4f4f4 5px,#ebebeb 10px,#ebebeb 176px,#d0d0d0 182px,#7c7c7c 188px,#9a9a9a 189px)"></div><div class=a style="left:20px;top:664px;width:189px;height:1px;background:#a0a0a0"></div><div class=a style="left:32px;top:605px;width:98px;height:23px;background:#f8f8f8"></div><div class=a style="left:32px;top:605px;width:98px;height:4px;background:linear-gradient(to bottom,#b6b6b6,#d8d8d8);clip-path:polygon(0 0,100% 0,calc(100% - 4px) 100%,4px 100%)"></div><div class=a style="left:32px;top:624px;width:98px;height:4px;background:linear-gradient(to top,#ececec,#e6e6e6);clip-path:polygon(4px 0,calc(100% - 4px) 0,100% 100%,0 100%)"></div><div class=a style="left:32px;top:605px;width:4px;height:23px;background:linear-gradient(to right,#bababa,#dadada);clip-path:polygon(0 0,100% 4px,100% calc(100% - 4px),0 100%)"></div><div class=a style="left:126px;top:605px;width:4px;height:23px;background:linear-gradient(to left,#ececec,#e6e6e6);clip-path:polygon(0 4px,100% 0,100% 100%,0 calc(100% - 4px))"></div><div class=t style="left:38px;top:612px;font-size:10.5px;color:#101018">Time</div><div class=a style="left:32px;top:635px;width:98px;height:23px;background:#f8f8f8"></div><div class=a style="left:32px;top:635px;width:98px;height:4px;background:linear-gradient(to bottom,#b6b6b6,#d8d8d8);clip-path:polygon(0 0,100% 0,calc(100% - 4px) 100%,4px 100%)"></div><div class=a style="left:32px;top:654px;width:98px;height:4px;background:linear-gradient(to top,#ececec,#e6e6e6);clip-path:polygon(4px 0,calc(100% - 4px) 0,100% 100%,0 100%)"></div><div class=a style="left:32px;top:635px;width:4px;height:23px;background:linear-gradient(to right,#bababa,#dadada);clip-path:polygon(0 0,100% 4px,100% calc(100% - 4px),0 100%)"></div><div class=a style="left:126px;top:635px;width:4px;height:23px;background:linear-gradient(to left,#ececec,#e6e6e6);clip-path:polygon(0 4px,100% 0,100% 100%,0 calc(100% - 4px))"></div><div class=t style="left:38px;top:642px;font-size:10.5px;color:#101018">% Full Scale</div><div class=a style="left:130px;top:605px;width:21px;height:18px;background:linear-gradient(#cacaca,#bababa);box-shadow:inset 1px 1px 0 #f6f6f6,inset -1px -1px 0 #989898"><svg class=a style="left:5px;top:3px;overflow:visible" width="11" height="13"><path d="M3 6V3.6A2.4 2.4 0 0 1 7.8 3.6V6" stroke="#000" stroke-width="1.7" fill="none"/><rect x="1.2" y="6.4" width="8.4" height="6" fill="#fff" stroke="#000" stroke-width="1.4"/><rect x="4.4" y="8.2" width="2" height="2.6" fill="#000"/></svg></div><div class=a style="left:152px;top:605px;width:21px;height:18px;background:linear-gradient(#cacaca,#bababa);box-shadow:inset 1px 1px 0 #f6f6f6,inset -1px -1px 0 #989898"><div class=a style="left:2px;top:2px;width:3px;height:3px;background:#50e050"></div><svg class=a style="left:2px;top:1px;overflow:visible" width="18" height="16"><path d="M7.7 3V11.5" stroke="#000" stroke-width="1.4"/><path d="M7 11.5H16" stroke="#000" stroke-width="2"/><path d="M7.7 11.5L3.5 14.5" stroke="#000" stroke-width="1.2"/><path d="M11 1.5L15.5 7.5M15.5 1.5L11 7.5" stroke="#000" stroke-width="1.2"/></svg></div><div class=a style="left:174px;top:605px;width:21px;height:18px;background:linear-gradient(#ececec,#d8d8d8);box-shadow:inset 1px 1px 0 #f6f6f6,inset -1px -1px 0 #989898"><svg class=a style="left:2px;top:4px;overflow:visible" width="17" height="12"><path d="M0.5 0.5L3.5 6.5M3.5 0.5L0.5 6.5" stroke="#000" stroke-width="1.3"/><rect x="5" y="5.5" width="1.4" height="1.4" fill="#000"/><path d="M8 0.5L11 6.5M11 0.5L8 6.5" stroke="#000" stroke-width="1.3"/><path d="M12.5 0.5L15.5 6.5M15.5 0.5L12.5 6.5" stroke="#000" stroke-width="1.3"/><path d="M11 9H16L13.5 11.5Z" fill="#000"/></svg></div><div class=a style="left:130px;top:635px;width:21px;height:18px;background:linear-gradient(#ececec,#d8d8d8);box-shadow:inset 1px 1px 0 #f6f6f6,inset -1px -1px 0 #989898"><svg class=a style="left:5px;top:3px;overflow:visible" width="11" height="13"><path d="M3 6.5V4A2.4 2.4 0 0 1 7.8 4V4.6" stroke="#000" stroke-width="1.7" fill="none" transform="translate(0 0)"/><rect x="1.2" y="6.4" width="8.4" height="6" fill="#fff" stroke="#000" stroke-width="1.4"/><rect x="4.4" y="8.2" width="2" height="2.6" fill="#000"/></svg></div><div class=a style="left:152px;top:635px;width:21px;height:18px;background:linear-gradient(#ececec,#d8d8d8);box-shadow:inset 1px 1px 0 #f6f6f6,inset -1px -1px 0 #989898"><div class=a style="left:2px;top:2px;width:3px;height:3px;background:#505050"></div><svg class=a style="left:2px;top:1px;overflow:visible" width="18" height="16"><path d="M7.7 3V11.5" stroke="#000" stroke-width="1.4"/><path d="M7 11.5H16" stroke="#000" stroke-width="2"/><path d="M7.7 11.5L3.5 14.5" stroke="#000" stroke-width="1.2"/><path d="M11 1.5L13.2 4.5L15.5 1.5M13.2 4.5V8.5" stroke="#000" stroke-width="1.2" fill="none"/></svg></div><div class=a style="left:174px;top:635px;width:21px;height:18px;background:linear-gradient(#ececec,#d8d8d8);box-shadow:inset 1px 1px 0 #f6f6f6,inset -1px -1px 0 #989898"><svg class=a style="left:2px;top:4px;overflow:visible" width="17" height="12"><path d="M0.5 0.5L2.0 3.5L3.5 0.5M2.0 3.5V6.5" stroke="#000" stroke-width="1.3" fill="none"/><rect x="5" y="5.5" width="1.4" height="1.4" fill="#000"/><path d="M8 0.5L9.5 3.5L11 0.5M9.5 3.5V6.5" stroke="#000" stroke-width="1.3" fill="none"/><path d="M12.5 0.5L14.0 3.5L15.5 0.5M14.0 3.5V6.5" stroke="#000" stroke-width="1.3" fill="none"/><path d="M11 9H16L13.5 11.5Z" fill="#000"/></svg></div><div class=a style="left:396px;top:601px;width:279px;height:64px;background:linear-gradient(90deg,#fff 0,#f4f4f4 5px,#ebebeb 10px,#ebebeb 266px,#d0d0d0 272px,#7c7c7c 278px,#9a9a9a 279px)"></div><div class=a style="left:396px;top:664px;width:279px;height:1px;background:#a0a0a0"></div><div class=a style="left:409px;top:605px;width:78px;height:24px;background:#f8f8f8"></div><div class=a style="left:409px;top:605px;width:78px;height:4px;background:linear-gradient(to bottom,#b6b6b6,#d8d8d8);clip-path:polygon(0 0,100% 0,calc(100% - 4px) 100%,4px 100%)"></div><div class=a style="left:409px;top:625px;width:78px;height:4px;background:linear-gradient(to top,#ececec,#e6e6e6);clip-path:polygon(4px 0,calc(100% - 4px) 0,100% 100%,0 100%)"></div><div class=a style="left:409px;top:605px;width:4px;height:24px;background:linear-gradient(to right,#bababa,#dadada);clip-path:polygon(0 0,100% 4px,100% calc(100% - 4px),0 100%)"></div><div class=a style="left:483px;top:605px;width:4px;height:24px;background:linear-gradient(to left,#ececec,#e6e6e6);clip-path:polygon(0 4px,100% 0,100% 100%,0 calc(100% - 4px))"></div><div class=t style="left:415px;top:612px;font-size:10.5px;color:#101018">Cursor 1</div><div class=a style="left:487px;top:605px;width:55px;height:24px;background:#f8f8f8"></div><div class=a style="left:487px;top:605px;width:55px;height:4px;background:linear-gradient(to bottom,#b6b6b6,#d8d8d8);clip-path:polygon(0 0,100% 0,calc(100% - 4px) 100%,4px 100%)"></div><div class=a style="left:487px;top:625px;width:55px;height:4px;background:linear-gradient(to top,#ececec,#e6e6e6);clip-path:polygon(4px 0,calc(100% - 4px) 0,100% 100%,0 100%)"></div><div class=a style="left:487px;top:605px;width:4px;height:24px;background:linear-gradient(to right,#bababa,#dadada);clip-path:polygon(0 0,100% 4px,100% calc(100% - 4px),0 100%)"></div><div class=a style="left:538px;top:605px;width:4px;height:24px;background:linear-gradient(to left,#ececec,#e6e6e6);clip-path:polygon(0 4px,100% 0,100% 100%,0 calc(100% - 4px))"></div><div class=t style="left:492px;top:612px;font-size:11px;color:#101018">0.0000</div><div class=a style="left:541px;top:605px;width:54px;height:24px;background:#f8f8f8"></div><div class=a style="left:541px;top:605px;width:54px;height:4px;background:linear-gradient(to bottom,#b6b6b6,#d8d8d8);clip-path:polygon(0 0,100% 0,calc(100% - 4px) 100%,4px 100%)"></div><div class=a style="left:541px;top:625px;width:54px;height:4px;background:linear-gradient(to top,#ececec,#e6e6e6);clip-path:polygon(4px 0,calc(100% - 4px) 0,100% 100%,0 100%)"></div><div class=a style="left:541px;top:605px;width:4px;height:24px;background:linear-gradient(to right,#bababa,#dadada);clip-path:polygon(0 0,100% 4px,100% calc(100% - 4px),0 100%)"></div><div class=a style="left:591px;top:605px;width:4px;height:24px;background:linear-gradient(to left,#ececec,#e6e6e6);clip-path:polygon(0 4px,100% 0,100% 100%,0 calc(100% - 4px))"></div><div class=t style="left:546px;top:612px;font-size:11px;color:#101018">0.00</div><div class=a style="left:596px;top:605px;width:21px;height:18px;background:linear-gradient(#ececec,#d8d8d8);box-shadow:inset 1px 1px 0 #f6f6f6,inset -1px -1px 0 #989898"><div class=a style="left:2px;top:2px;width:3px;height:3px;background:#50e050"></div><svg class=a style="left:4px;top:2px;overflow:visible" width="14" height="15"><path d="M6.5 2V13M1 7.5H12" stroke="#000" stroke-width="1.6"/><path d="M6.5 0.5L3.8 3.5H9.2ZM6.5 14.5L3.8 11.5H9.2ZM0 7.5L3 4.8V10.2ZM13 7.5L10 4.8V10.2Z" fill="#000"/></svg></div><div class=a style="left:618px;top:605px;width:21px;height:18px;background:linear-gradient(#ececec,#d8d8d8);box-shadow:inset 1px 1px 0 #f6f6f6,inset -1px -1px 0 #989898"><div class=a style="left:2px;top:2px;width:16px;height:13px;background:#0f0090"></div><svg class=a style="left:2px;top:2px;overflow:visible" width="16" height="13"><path d="M0 6.5H16M8.5 0V13" stroke="#202010" stroke-width="2"/><path d="M0 6.5H16M8.5 0V13" stroke="#e8d890" stroke-width="0.9"/><path d="M6 4L11 9M11 4L6 9" stroke="#fff" stroke-width="0.9"/></svg></div><div class=a style="left:640px;top:605px;width:21px;height:18px;background:linear-gradient(#ececec,#d8d8d8);box-shadow:inset 1px 1px 0 #f6f6f6,inset -1px -1px 0 #989898"><svg class=a style="left:3px;top:3px;overflow:visible" width="18" height="13"><path d="M3 6V3A2.2 2.2 0 0 1 7.4 3V3.8" stroke="#000" stroke-width="1.5" fill="none"/><rect x="1" y="6.2" width="7.4" height="5.6" fill="#fff" stroke="#000" stroke-width="1.4"/><rect x="4" y="8" width="1.6" height="2.2" fill="#000"/><path d="M10.5 4.5H15L12.75 7Z" fill="#000"/></svg></div><div class=a style="left:409px;top:635px;width:78px;height:24px;background:#f8f8f8"></div><div class=a style="left:409px;top:635px;width:78px;height:4px;background:linear-gradient(to bottom,#b6b6b6,#d8d8d8);clip-path:polygon(0 0,100% 0,calc(100% - 4px) 100%,4px 100%)"></div><div class=a style="left:409px;top:655px;width:78px;height:4px;background:linear-gradient(to top,#ececec,#e6e6e6);clip-path:polygon(4px 0,calc(100% - 4px) 0,100% 100%,0 100%)"></div><div class=a style="left:409px;top:635px;width:4px;height:24px;background:linear-gradient(to right,#bababa,#dadada);clip-path:polygon(0 0,100% 4px,100% calc(100% - 4px),0 100%)"></div><div class=a style="left:483px;top:635px;width:4px;height:24px;background:linear-gradient(to left,#ececec,#e6e6e6);clip-path:polygon(0 4px,100% 0,100% 100%,0 calc(100% - 4px))"></div><div class=t style="left:415px;top:642px;font-size:10.5px;color:#101018">Cursor 2</div><div class=a style="left:487px;top:635px;width:55px;height:24px;background:#f8f8f8"></div><div class=a style="left:487px;top:635px;width:55px;height:4px;background:linear-gradient(to bottom,#b6b6b6,#d8d8d8);clip-path:polygon(0 0,100% 0,calc(100% - 4px) 100%,4px 100%)"></div><div class=a style="left:487px;top:655px;width:55px;height:4px;background:linear-gradient(to top,#ececec,#e6e6e6);clip-path:polygon(4px 0,calc(100% - 4px) 0,100% 100%,0 100%)"></div><div class=a style="left:487px;top:635px;width:4px;height:24px;background:linear-gradient(to right,#bababa,#dadada);clip-path:polygon(0 0,100% 4px,100% calc(100% - 4px),0 100%)"></div><div class=a style="left:538px;top:635px;width:4px;height:24px;background:linear-gradient(to left,#ececec,#e6e6e6);clip-path:polygon(0 4px,100% 0,100% 100%,0 calc(100% - 4px))"></div><div class=t style="left:492px;top:642px;font-size:11px;color:#101018">0.0000</div><div class=a style="left:541px;top:635px;width:54px;height:24px;background:#f8f8f8"></div><div class=a style="left:541px;top:635px;width:54px;height:4px;background:linear-gradient(to bottom,#b6b6b6,#d8d8d8);clip-path:polygon(0 0,100% 0,calc(100% - 4px) 100%,4px 100%)"></div><div class=a style="left:541px;top:655px;width:54px;height:4px;background:linear-gradient(to top,#ececec,#e6e6e6);clip-path:polygon(4px 0,calc(100% - 4px) 0,100% 100%,0 100%)"></div><div class=a style="left:541px;top:635px;width:4px;height:24px;background:linear-gradient(to right,#bababa,#dadada);clip-path:polygon(0 0,100% 4px,100% calc(100% - 4px),0 100%)"></div><div class=a style="left:591px;top:635px;width:4px;height:24px;background:linear-gradient(to left,#ececec,#e6e6e6);clip-path:polygon(0 4px,100% 0,100% 100%,0 calc(100% - 4px))"></div><div class=t style="left:546px;top:642px;font-size:11px;color:#101018">0.00</div><div class=a style="left:596px;top:635px;width:21px;height:18px;background:linear-gradient(#ececec,#d8d8d8);box-shadow:inset 1px 1px 0 #f6f6f6,inset -1px -1px 0 #989898"><div class=a style="left:2px;top:2px;width:3px;height:3px;background:#505050"></div><svg class=a style="left:4px;top:2px;overflow:visible" width="14" height="15"><path d="M6.5 2V13M1 7.5H12" stroke="#000" stroke-width="1.6"/><path d="M6.5 0.5L3.8 3.5H9.2ZM6.5 14.5L3.8 11.5H9.2ZM0 7.5L3 4.8V10.2ZM13 7.5L10 4.8V10.2Z" fill="#000"/></svg></div><div class=a style="left:618px;top:635px;width:21px;height:18px;background:linear-gradient(#ececec,#d8d8d8);box-shadow:inset 1px 1px 0 #f6f6f6,inset -1px -1px 0 #989898"><div class=a style="left:2px;top:2px;width:16px;height:13px;background:#0f0090"></div><svg class=a style="left:2px;top:2px;overflow:visible" width="16" height="13"><path d="M0 6.5H16M8.5 0V13" stroke="#202010" stroke-width="2"/><path d="M0 6.5H16M8.5 0V13" stroke="#e8d890" stroke-width="0.9"/><path d="M6 4L11 9M11 4L6 9" stroke="#fff" stroke-width="0.9"/></svg></div><div class=a style="left:640px;top:635px;width:21px;height:18px;background:linear-gradient(#ececec,#d8d8d8);box-shadow:inset 1px 1px 0 #f6f6f6,inset -1px -1px 0 #989898"><svg class=a style="left:3px;top:3px;overflow:visible" width="18" height="13"><path d="M3 6V3A2.2 2.2 0 0 1 7.4 3V3.8" stroke="#000" stroke-width="1.5" fill="none"/><rect x="1" y="6.2" width="7.4" height="5.6" fill="#fff" stroke="#000" stroke-width="1.4"/><rect x="4" y="8" width="1.6" height="2.2" fill="#000"/><path d="M10.5 4.5H15L12.75 7Z" fill="#000"/></svg></div><div class=a style="left:675px;top:601px;width:61px;height:37px;background:linear-gradient(90deg,#fff 0,#f4f4f4 5px,#ebebeb 10px,#ebebeb 48px,#d0d0d0 54px,#7c7c7c 60px,#9a9a9a 61px)"></div><div class=a style="left:675px;top:637px;width:61px;height:1px;background:#a0a0a0"></div><svg class=a style="left:690px;top:603px;overflow:visible" width="34" height="34"><path d="M16.7 1.5L31.7 16.7L16.7 31.7L1.7 16.7Z" fill="#b2b2b2" stroke="#1a1a1a" stroke-width="1.1"/><path d="M9.2 9.2L24.2 24.2M24.2 9.2L9.2 24.2" stroke="#1a1a1a" stroke-width="3.2"/><path d="M9.2 9.2L24.2 24.2M24.2 9.2L9.2 24.2" stroke="#b2b2b2" stroke-width="1.1"/></svg><div class=a style="left:736px;top:601px;width:88px;height:24px;background:linear-gradient(90deg,#fff 0,#f4f4f4 5px,#ebebeb 10px,#ebebeb 75px,#d0d0d0 81px,#7c7c7c 87px,#9a9a9a 88px)"></div><div class=a style="left:736px;top:624px;width:88px;height:1px;background:#a0a0a0"></div><div class=a style="left:750px;top:605px;width:18px;height:16px;background:linear-gradient(#ececec,#d8d8d8);box-shadow:inset 1px 1px 0 #f6f6f6,inset -1px -1px 0 #989898"><div class=a style="left:2px;top:2px;width:3px;height:3px;background:#406040"></div><svg class=a style="left:0px;top:0px;overflow:visible" width="18" height="16"><path d="M9.5 2V15M2.5 8.5H16.5" stroke="#000" stroke-width="1.3"/><circle cx="9.5" cy="8.5" r="1.5" fill="#fff" stroke="#000" stroke-width="1"/></svg></div><div class=a style="left:769px;top:605px;width:20px;height:16px;background:linear-gradient(#cacaca,#bababa);box-shadow:inset 1px 1px 0 #f6f6f6,inset -1px -1px 0 #989898"><div class=a style="left:0;top:0;width:20px;height:16px;background:linear-gradient(#9a9a9a,#808080)"></div><div class=a style="left:2px;top:2px;width:3px;height:3px;background:#60e060"></div><svg class=a style="left:0px;top:0px;overflow:visible" width="20" height="16"><circle cx="12.5" cy="6" r="4" fill="#fff" stroke="#000" stroke-width="1.3"/><path d="M12.5 3.8V8.2M10.3 6H14.7" stroke="#000" stroke-width="1.2"/><path d="M9.5 9L4.5 14" stroke="#000" stroke-width="2.2"/><path d="M9.2 9.3L5 13.5" stroke="#d0d0d0" stroke-width="0.8"/><path d="M13.5 12H18L15.75 14.5Z" fill="#000"/></svg></div><div class=a style="left:791px;top:605px;width:19px;height:16px;background:linear-gradient(#ececec,#d8d8d8);box-shadow:inset 1px 1px 0 #f6f6f6,inset -1px -1px 0 #989898"><div class=a style="left:2px;top:2px;width:3px;height:3px;background:#406040"></div><svg class=a style="left:3px;top:1px;overflow:visible" width="15" height="15"><path d="M4.5 13.5C3 12 1.5 10 1 8.5L2 7.5L4 9V3.5C4 2.7 5.5 2.7 5.5 3.5V7V2.5C5.5 1.7 7 1.7 7 2.5V7V2.8C7 2 8.5 2 8.5 2.8V7V3.8C8.5 3 10 3 10 3.8V9.5C10 11.5 9.5 12.5 8.5 13.5Z" fill="#fff" stroke="#000" stroke-width="1"/></svg></div><svg class=a style="left:845px;top:152px" width="142" height="62" viewBox="845 152 142 62">
<text x="852" y="182.5" font-family="Liberation Sans" font-weight="bold" font-style="italic" font-size="45" letter-spacing="-2.5" stroke="#000" stroke-width="0.5" textLength="54" lengthAdjust="spacingAndGlyphs">ue</text>
<path d="M909.5 181.5L916.0 163A2.6 2.6 0 0 1 921.2 163L914.7 181.5A2.6 2.6 0 0 1 909.5 181.5Z" fill="none" stroke="#000" stroke-width="1.1"/><path d="M919.4 181.5L925.9 163A2.6 2.6 0 0 1 931.1 163L924.6 181.5A2.6 2.6 0 0 1 919.4 181.5Z" fill="none" stroke="#000" stroke-width="1.1"/><path d="M929.3 181.5L935.8 163A2.6 2.6 0 0 1 941.0 163L934.5 181.5A2.6 2.6 0 0 1 929.3 181.5Z" fill="none" stroke="#000" stroke-width="1.1"/><path d="M939.2 181.5L945.7 163A2.6 2.6 0 0 1 950.9 163L944.4 181.5A2.6 2.6 0 0 1 939.2 181.5Z" fill="none" stroke="#000" stroke-width="1.1"/><path d="M949.1 181.5L955.6 163A2.6 2.6 0 0 1 960.8 163L954.3 181.5A2.6 2.6 0 0 1 949.1 181.5Z" fill="none" stroke="#000" stroke-width="1.1"/><path d="M959.0 181.5L965.5 163A2.6 2.6 0 0 1 970.7 163L964.2 181.5A2.6 2.6 0 0 1 959.0 181.5Z" fill="none" stroke="#000" stroke-width="1.1"/><path d="M968.9 181.5L975.4 163A2.6 2.6 0 0 1 980.6 163L974.1 181.5A2.6 2.6 0 0 1 968.9 181.5Z" fill="none" stroke="#000" stroke-width="1.1"/>
<path d="M853.5 186.7H971.8L969.6 196.6H849.2Z" fill="#000"/>
<text x="858.5" y="195.3" font-family="Liberation Sans" font-weight="bold" font-size="8.2" fill="#fff" textLength="80" lengthAdjust="spacingAndGlyphs" transform="translate(858.5 195.3) scale(1 0.8) translate(-858.5 -195.3)">SYSTEMS</text>
<text x="944" y="195.3" font-family="Liberation Sans" font-weight="bold" font-size="7" fill="#fff" textLength="20" lengthAdjust="spacingAndGlyphs">inc.</text>
<text x="848" y="208.6" font-family="Liberation Sans" font-weight="bold" font-style="italic" font-size="9" fill="#000" textLength="118" lengthAdjust="spacingAndGlyphs">The Ultrasound Company</text>
</svg><div class=t style="left:857px;top:552px;font-size:15px;color:#101018">Cursors on/off</div><div class=t style="left:870px;top:578px;font-size:12px;color:#101018">cursor 1</div><div class=t style="left:870px;top:602px;font-size:12px;color:#101018">cursor 2</div><div class=a style="left:918px;top:574px;width:26px;height:24px;border:1px solid #101010;background:#b0b0b0;box-shadow:inset 1px 1px 0 #e4e4e4,inset -2px -2px 0 #505050"></div><div class=a style="left:918px;top:599px;width:26px;height:24px;border:1px solid #101010;background:#b0b0b0;box-shadow:inset 1px 1px 0 #e4e4e4,inset -2px -2px 0 #505050"></div><div class=a style="left:14px;top:699px;width:245px;height:51px;background:#d4d4d4"></div><div class=a style="left:14px;top:699px;width:245px;height:4px;background:linear-gradient(to bottom,#d0d0d0,#a4a4a4);clip-path:polygon(0 0,100% 0,calc(100% - 4px) 100%,4px 100%)"></div><div class=a style="left:14px;top:746px;width:245px;height:4px;background:linear-gradient(to top,#d4d4d4,#ececec);clip-path:polygon(4px 0,calc(100% - 4px) 0,100% 100%,0 100%)"></div><div class=a style="left:14px;top:699px;width:4px;height:51px;background:linear-gradient(to right,#cccccc,#a0a0a0);clip-path:polygon(0 0,100% 4px,100% calc(100% - 4px),0 100%)"></div><div class=a style="left:255px;top:699px;width:4px;height:51px;background:linear-gradient(to left,#d4d4d4,#ececec);clip-path:polygon(0 4px,100% 0,100% 100%,0 calc(100% - 4px))"></div><div class=a style="left:258px;top:699px;width:384px;height:51px;background:#d4d4d4"></div><div class=a style="left:258px;top:699px;width:384px;height:4px;background:linear-gradient(to bottom,#d0d0d0,#a4a4a4);clip-path:polygon(0 0,100% 0,calc(100% - 4px) 100%,4px 100%)"></div><div class=a style="left:258px;top:746px;width:384px;height:4px;background:linear-gradient(to top,#d4d4d4,#ececec);clip-path:polygon(4px 0,calc(100% - 4px) 0,100% 100%,0 100%)"></div><div class=a style="left:258px;top:699px;width:4px;height:51px;background:linear-gradient(to right,#cccccc,#a0a0a0);clip-path:polygon(0 0,100% 4px,100% calc(100% - 4px),0 100%)"></div><div class=a style="left:638px;top:699px;width:4px;height:51px;background:linear-gradient(to left,#d4d4d4,#ececec);clip-path:polygon(0 4px,100% 0,100% 100%,0 calc(100% - 4px))"></div><div class=a style="left:642px;top:699px;width:369px;height:51px;background:#d4d4d4"></div><div class=a style="left:642px;top:699px;width:369px;height:4px;background:linear-gradient(to bottom,#d0d0d0,#a4a4a4);clip-path:polygon(0 0,100% 0,calc(100% - 4px) 100%,4px 100%)"></div><div class=a style="left:642px;top:746px;width:369px;height:4px;background:linear-gradient(to top,#d4d4d4,#ececec);clip-path:polygon(4px 0,calc(100% - 4px) 0,100% 100%,0 100%)"></div><div class=a style="left:642px;top:699px;width:4px;height:51px;background:linear-gradient(to right,#cccccc,#a0a0a0);clip-path:polygon(0 0,100% 4px,100% calc(100% - 4px),0 100%)"></div><div class=a style="left:1007px;top:699px;width:4px;height:51px;background:linear-gradient(to left,#d4d4d4,#ececec);clip-path:polygon(0 4px,100% 0,100% 100%,0 calc(100% - 4px))"></div><div class=t style="left:394px;top:714px;font-size:10.5px;color:#101018">Alarm enabled</div><svg class=a style="left:592px;top:711px" width="30" height="30"><circle cx="13.8" cy="14.3" r="11" fill="#b4b4b4"/><circle cx="15.6" cy="16.1" r="10.5" fill="#fafafa"/><circle cx="14.5" cy="15" r="10" fill="#cfcfcf"/><defs><radialGradient id="lg" cx="0.35" cy="0.3" r="0.8"><stop offset="0" stop-color="#90ff90"/><stop offset="0.3" stop-color="#30f040"/><stop offset="1" stop-color="#10a020"/></radialGradient></defs><circle cx="14.5" cy="15" r="9" fill="url(#lg)"/></svg><svg class=a style="left:1005px;top:752px" width="16" height="14"><path d="M15 0L1 14M15 4L5 14M15 8L9 14" stroke="#a09c90" stroke-width="1.2"/><path d="M14 0L0 14M14 4L4 14M14 8L8 14" stroke="#fff" stroke-width="1"/></svg></body></html>
